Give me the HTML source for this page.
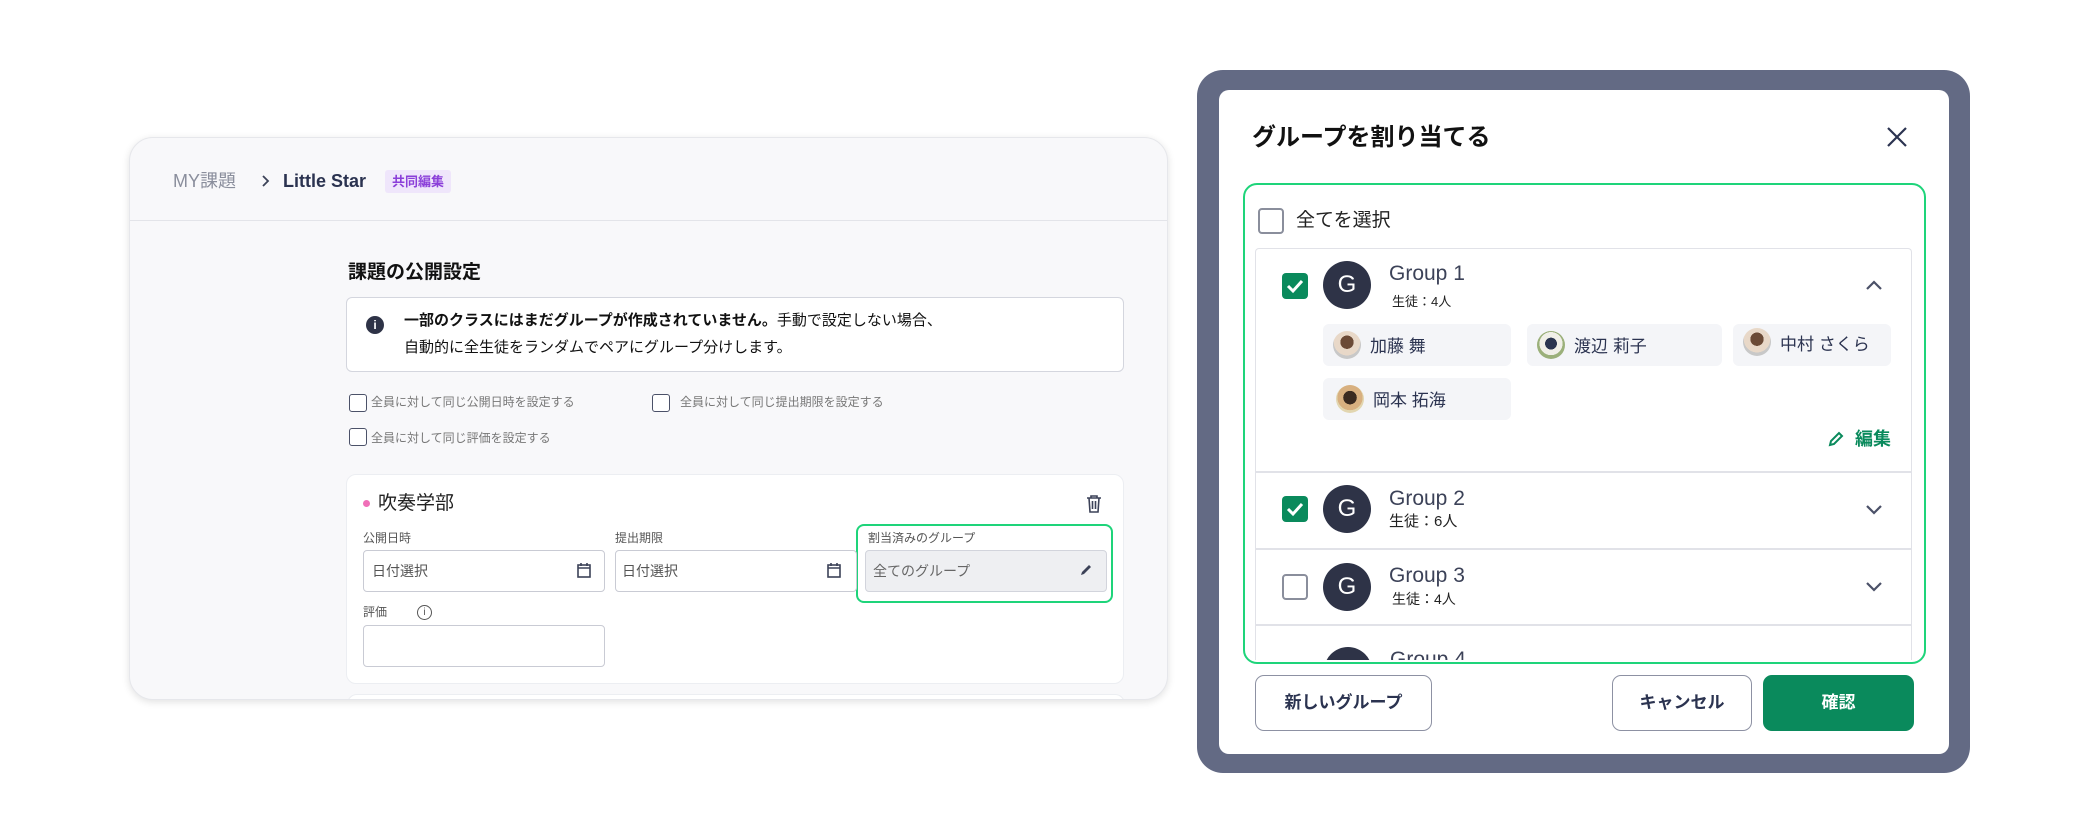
<!DOCTYPE html>
<html><head><meta charset="utf-8"><style>
*{box-sizing:border-box;margin:0;padding:0}
body{width:2100px;height:840px;background:#fff;position:relative;overflow:hidden;font-family:"Liberation Sans","Noto Sans CJK JP",sans-serif;color:#222}
.a{position:absolute}
.t{position:absolute;white-space:nowrap;line-height:1}
.cb{position:absolute;border:2px solid #4b5168;border-radius:3px;background:#fff}
.inp{position:absolute;border:1.5px solid #c9cbd4;border-radius:4px;background:#fff}
.chip{position:absolute;background:#f4f5f8;border-radius:6px;height:42px}
.chip .av{position:absolute;left:10px;top:7px;width:28px;height:28px;border-radius:50%;background:radial-gradient(circle at 50% 40%,#6b4a36 0 30%,#e8d8c8 31% 60%,#c8c8c8 61%)}
.chip span{position:absolute;left:47px;top:8px;font-size:17px;color:#2b3350;white-space:nowrap}
.gav{position:absolute;left:1323px;width:48px;height:48px;border-radius:50%;background:#2e3347;color:#fff;font-size:24px;text-align:center;line-height:48px}
.gchk{position:absolute;left:1282px;width:26px;height:26px;border-radius:4px;background:#0a8a5c}
.gname{position:absolute;left:1389px;font-size:21px;color:#3c4258;white-space:nowrap;line-height:1}
.gsub{position:absolute;left:1392px;font-size:13px;color:#222;white-space:nowrap;line-height:1}
.btn{position:absolute;top:675px;height:56px;border:1.5px solid #8d91a3;border-radius:9px;background:#fff;font-size:17px;font-weight:bold;color:#2b3350;text-align:center;line-height:53px}
</style></head><body>

<div class="a" style="left:129px;top:137px;width:1039px;height:563px;background:#f8f8fa;border:1px solid #e6e7eb;border-radius:24px;box-shadow:0 2px 8px rgba(0,0,0,.12);overflow:hidden">
  <div class="a" style="left:0;top:82px;width:100%;height:1px;background:#e3e4e9"></div>
  <div class="a" style="left:217px;top:556px;width:778px;height:80px;background:#fff;border-radius:10px;border:1px solid #eceef2"></div>
</div>
<div class="t" style="left:173px;top:172px;font-size:18px;color:#8a8e9c">MY課題</div>
<svg class="a" style="left:260px;top:173px" width="12" height="16" viewBox="0 0 12 16"><path d="M3 3l5 5-5 5" fill="none" stroke="#3c4258" stroke-width="1.8"/></svg>
<div class="t" style="left:283px;top:172px;font-size:18px;font-weight:bold;color:#2b3350">Little Star</div>
<div class="a" style="left:385px;top:170px;width:66px;height:23px;background:#efe6fb;border-radius:3px;color:#8b3fd9;font-size:13px;font-weight:bold;text-align:center;line-height:23px">共同編集</div>

<div class="t" style="left:348px;top:263px;font-size:19px;font-weight:bold;color:#111">課題の公開設定</div>
<div class="a" style="left:346px;top:297px;width:778px;height:75px;background:#fff;border:1.5px solid #d4d6de;border-radius:6px"></div>
<div class="a" style="left:366px;top:316px;width:18px;height:18px;border-radius:50%;background:#2e3347;color:#fff;font-size:12px;font-weight:bold;text-align:center;line-height:18px">i</div>
<div class="t" style="left:404px;top:313px;font-size:15px;color:#111"><b>一部のクラスにはまだグループが作成されていません。</b>手動で設定しない場合、</div>
<div class="t" style="left:404px;top:340px;font-size:15px;color:#111">自動的に全生徒をランダムでペアにグループ分けします。</div>

<div class="cb" style="left:349px;top:394px;width:18px;height:18px;border-width:1.5px"></div>
<div class="t" style="left:371px;top:396px;font-size:12px;color:#777">全員に対して同じ公開日時を設定する</div>
<div class="cb" style="left:652px;top:394px;width:18px;height:18px;border-width:1.5px"></div>
<div class="t" style="left:680px;top:396px;font-size:12px;color:#777">全員に対して同じ提出期限を設定する</div>
<div class="cb" style="left:349px;top:428px;width:18px;height:18px;border-width:1.5px"></div>
<div class="t" style="left:371px;top:432px;font-size:12px;color:#777">全員に対して同じ評価を設定する</div>

<div class="a" style="left:346px;top:474px;width:778px;height:210px;background:#fff;border-radius:10px;border:1px solid #eceef2"></div>
<div class="a" style="left:363px;top:500px;width:7px;height:7px;border-radius:50%;background:#f06fb8"></div>
<div class="t" style="left:378px;top:494px;font-size:19px;color:#222">吹奏学部</div>
<svg class="a" style="left:1085px;top:494px" width="18" height="20" viewBox="0 0 18 20"><path d="M2 4h14M6 4V2h6v2M4 4l1 14h8l1-14M7.5 7v8M10.5 7v8" fill="none" stroke="#3c4258" stroke-width="1.6"/></svg>
<div class="t" style="left:363px;top:532px;font-size:12px;color:#555">公開日時</div>
<div class="t" style="left:615px;top:532px;font-size:12px;color:#555">提出期限</div>
<div class="a" style="left:856px;top:524px;width:257px;height:79px;border:2.5px solid #1ed47a;border-radius:8px"></div>
<div class="t" style="left:868px;top:532px;font-size:12px;color:#555">割当済みのグループ</div>
<div class="inp" style="left:363px;top:550px;width:242px;height:42px"></div>
<div class="t" style="left:372px;top:564px;font-size:14px;color:#555">日付選択</div>
<svg class="a" style="left:576px;top:562px" width="16" height="17" viewBox="0 0 16 17"><rect x="2" y="3" width="12" height="12" fill="none" stroke="#3c4258" stroke-width="1.6"/><path d="M2 6h12M5 1v3M11 1v3" stroke="#3c4258" stroke-width="1.6"/></svg>
<div class="inp" style="left:615px;top:550px;width:242px;height:42px"></div>
<div class="t" style="left:622px;top:564px;font-size:14px;color:#555">日付選択</div>
<svg class="a" style="left:826px;top:562px" width="16" height="17" viewBox="0 0 16 17"><rect x="2" y="3" width="12" height="12" fill="none" stroke="#3c4258" stroke-width="1.6"/><path d="M2 6h12M5 1v3M11 1v3" stroke="#3c4258" stroke-width="1.6"/></svg>
<div class="a" style="left:865px;top:550px;width:242px;height:42px;background:#eeeff2;border:1.5px solid #d2d4dc;border-radius:4px"></div>
<div class="t" style="left:873px;top:564px;font-size:14px;color:#666">全てのグループ</div>
<svg class="a" style="left:1078px;top:562px" width="16" height="16" viewBox="0 0 16 16"><path d="M3 13l1-3 7-7 2 2-7 7z" fill="#3c4258"/></svg>
<div class="t" style="left:363px;top:606px;font-size:12px;color:#555">評価</div>
<div class="a" style="left:417px;top:605px;width:15px;height:15px;border:1.2px solid #555;border-radius:50%;font-size:10px;text-align:center;line-height:13px;color:#555">i</div>
<div class="inp" style="left:363px;top:625px;width:242px;height:42px"></div>

<div class="a" style="left:1197px;top:70px;width:773px;height:703px;background:#636a84;border-radius:26px"></div>
<div class="a" style="left:1219px;top:90px;width:730px;height:664px;background:#fff;border-radius:10px"></div>
<div class="t" style="left:1252px;top:126px;font-size:24px;font-weight:bold;color:#111">グループを割り当てる</div>
<svg class="a" style="left:1885px;top:125px" width="24" height="24" viewBox="0 0 24 24"><path d="M3 3l18 18M21 3L3 21" stroke="#2b3350" stroke-width="2.2"/></svg>

<div class="a" style="left:1243px;top:183px;width:683px;height:481px;border:2.5px solid #1ed47a;border-radius:14px"></div>
<div class="cb" style="left:1258px;top:208px;width:26px;height:26px;border-color:#8a8e9c;border-radius:4px"></div>
<div class="t" style="left:1296px;top:211px;font-size:19px;color:#222">全てを選択</div>

<div class="a" style="left:1255px;top:248px;width:657px;height:412px;border:1.5px solid #e1e2e8;border-bottom:none;border-radius:4px 4px 0 0;overflow:hidden">
  <div class="a" style="left:0;top:222px;width:100%;height:2px;background:#e1e2e8"></div>
  <div class="a" style="left:0;top:299px;width:100%;height:2px;background:#e1e2e8"></div>
  <div class="a" style="left:0;top:375px;width:100%;height:2px;background:#e1e2e8"></div>
  <div class="a" style="left:68px;top:398px;width:48px;height:48px;border-radius:50%;background:#2e3347"></div>
  <div class="t" style="left:134px;top:400px;font-size:21px;color:#3c4258">Group 4</div>
</div>

<div class="gchk" style="top:273px"><svg width="26" height="26" viewBox="0 0 26 26"><path d="M6 13l5 5 9-10" fill="none" stroke="#fff" stroke-width="3"/></svg></div>
<div class="gav" style="top:261px">G</div>
<div class="gname" style="top:263px">Group 1</div>
<div class="gsub" style="top:295px">生徒：4人</div>
<svg class="a" style="left:1864px;top:278px" width="20" height="14" viewBox="0 0 20 14"><path d="M3 11l7-7 7 7" fill="none" stroke="#4b5168" stroke-width="2.2"/></svg>
<div class="chip" style="left:1323px;top:324px;width:188px"><div class="av"></div><span>加藤 舞</span></div>
<div class="chip" style="left:1527px;top:324px;width:195px"><div class="av" style="background:radial-gradient(circle at 50% 45%,#2b3550 0 28%,#f0efe8 29% 55%,#9bb07a 56%)"></div><span>渡辺 莉子</span></div>
<div class="chip" style="left:1733px;top:324px;width:158px"><div class="av" style="top:4px"></div><span style="top:6px">中村 さくら</span></div>
<div class="chip" style="left:1323px;top:378px;width:188px"><div class="av" style="left:13px;background:radial-gradient(circle at 50% 45%,#3a2a20 0 32%,#d8b080 33% 60%,#e2d6b0 61%)"></div><span style="left:50px">岡本 拓海</span></div>
<svg class="a" style="left:1827px;top:430px" width="18" height="18" viewBox="0 0 18 18"><path d="M3 15l1-4 8-8 3 3-8 8z" fill="none" stroke="#0a8a5c" stroke-width="2"/></svg>
<div class="t" style="left:1855px;top:430px;font-size:18px;font-weight:bold;color:#0a8a5c">編集</div>

<div class="gchk" style="top:496px"><svg width="26" height="26" viewBox="0 0 26 26"><path d="M6 13l5 5 9-10" fill="none" stroke="#fff" stroke-width="3"/></svg></div>
<div class="gav" style="top:485px">G</div>
<div class="gname" style="top:488px">Group 2</div>
<div class="gsub" style="left:1389px;top:514px;font-size:15px">生徒：6人</div>
<svg class="a" style="left:1864px;top:503px" width="20" height="14" viewBox="0 0 20 14"><path d="M3 3l7 7 7-7" fill="none" stroke="#4b5168" stroke-width="2.2"/></svg>

<div class="cb" style="left:1282px;top:574px;width:26px;height:26px;border-color:#8a8e9c;border-radius:4px"></div>
<div class="gav" style="top:563px">G</div>
<div class="gname" style="top:565px">Group 3</div>
<div class="gsub" style="top:592px;font-size:14px">生徒：4人</div>
<svg class="a" style="left:1864px;top:580px" width="20" height="14" viewBox="0 0 20 14"><path d="M3 3l7 7 7-7" fill="none" stroke="#4b5168" stroke-width="2.2"/></svg>

<div class="btn" style="left:1255px;width:177px">新しいグループ</div>
<div class="btn" style="left:1612px;width:140px">キャンセル</div>
<div class="btn" style="left:1763px;width:151px;background:#0a8a5c;border-color:#0a8a5c;color:#fff">確認</div>

</body></html>
